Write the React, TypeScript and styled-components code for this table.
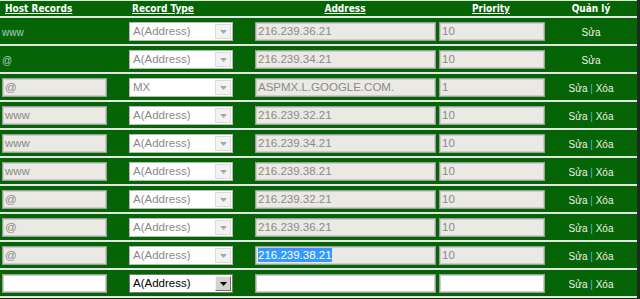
import React from "react";
import styled, { createGlobalStyle, css } from "styled-components";

const GREEN = "#056405";
const SEP = "#e3e5e1";

const Global = createGlobalStyle`
  html, body { margin: 0; padding: 0; background: #1a2e1a; }
  body { width: 640px; height: 299px; overflow: hidden; font-family: "Liberation Sans", Arial, sans-serif; }
`;

const Table = styled.div`
  width: 637px;
  background: ${GREEN};
  border-top: 1px solid ${SEP};
  border-bottom: 2px solid ${SEP};
`;

const Row = styled.div<{ $header?: boolean }>`
  display: grid;
  grid-template-columns: 127px 126px 184px 108px 92px;
  align-items: center;
  ${(p) =>
    p.$header
      ? css`
          height: 15px;
        `
      : css`
          height: 25px;
          padding-top: 1px;
          border-top: 2px solid ${SEP};
        `}
`;

const HeadCell = styled.div<{ $align?: "left" | "center"; $plain?: boolean }>`
  font-family: "DejaVu Sans Condensed", "Liberation Sans", sans-serif;
  font-weight: bold;
  font-size: 10px;
  line-height: 15px;
  color: #ffffff;
  text-decoration: ${(p) => (p.$plain ? "none" : "underline")};
  text-align: ${(p) => p.$align ?? "left"};
  padding-left: ${(p) => (p.$align === "center" ? 0 : 5)}px;
  white-space: nowrap;
`;

const Cell = styled.div`
  padding-left: 2px;
  display: flex;
  align-items: center;
`;

const PlainHost = styled.span`
  font-size: 10px;
  color: #a8d0c6;
  padding-top: 1px;
`;

const Field = styled.div<{ $w: number; $disabled?: boolean }>`
  width: ${(p) => p.$w}px;
  height: 19px;
  box-sizing: border-box;
  border: 1px solid #9d9d9d;
  box-shadow: inset 0 0 0 1px #cdcdcd;
  background: ${(p) => (p.$disabled ? "#ebe9e3" : "#ffffff")};
  color: #8a8a8a;
  font-size: 11.5px;
  line-height: 17px;
  padding-left: 2px;
  white-space: nowrap;
  overflow: hidden;
`;

const Selected = styled.span`
  background: #3399ff;
  color: #ffffff;
  padding: 1px 0;
`;

const SelectBox = styled.div<{ $disabled?: boolean }>`
  width: 104px;
  height: 19px;
  box-sizing: border-box;
  border: 1px solid ${(p) => (p.$disabled ? "#b9b9b9" : "#7a7a7a")};
  background: #ffffff;
  display: flex;
  align-items: stretch;
  font-size: 11.5px;
  color: ${(p) => (p.$disabled ? "#8a8a8a" : "#000000")};
`;

const SelectText = styled.span`
  flex: 1;
  line-height: 17px;
  padding-left: 3px;
  white-space: nowrap;
`;

const SelectButton = styled.span<{ $disabled?: boolean }>`
  width: 16px;
  margin: 1px;
  box-sizing: border-box;
  display: flex;
  align-items: center;
  justify-content: center;
  ${(p) =>
    p.$disabled
      ? css`
          background: #f3f3f3;
          border: 1px solid #dcdcdc;
        `
      : css`
          background: #d6d3cc;
          border-top: 1px solid #f4f4f4;
          border-left: 1px solid #f4f4f4;
          border-right: 1px solid #6f6f6f;
          border-bottom: 1px solid #6f6f6f;
        `}
`;

const Actions = styled.div`
  text-align: center;
  font-size: 10px;
  color: #f2f2e8;
  white-space: nowrap;
  padding-top: 1px;
`;

const Pipe = styled.span`
  color: #3cc6f2;
`;

type Rec = {
  host: string;
  hostInput: boolean;
  type: string;
  addr: string;
  pri: string;
  del: boolean;
  selected?: boolean;
  fresh?: boolean;
};

const records: Rec[] = [
  { host: "www", hostInput: false, type: "A(Address)", addr: "216.239.36.21", pri: "10", del: false },
  { host: "@", hostInput: false, type: "A(Address)", addr: "216.239.34.21", pri: "10", del: false },
  { host: "@", hostInput: true, type: "MX", addr: "ASPMX.L.GOOGLE.COM.", pri: "1", del: true },
  { host: "www", hostInput: true, type: "A(Address)", addr: "216.239.32.21", pri: "10", del: true },
  { host: "www", hostInput: true, type: "A(Address)", addr: "216.239.34.21", pri: "10", del: true },
  { host: "www", hostInput: true, type: "A(Address)", addr: "216.239.38.21", pri: "10", del: true },
  { host: "@", hostInput: true, type: "A(Address)", addr: "216.239.32.21", pri: "10", del: true },
  { host: "@", hostInput: true, type: "A(Address)", addr: "216.239.36.21", pri: "10", del: true },
  { host: "@", hostInput: true, type: "A(Address)", addr: "216.239.38.21", pri: "10", del: true, selected: true },
  { host: "", hostInput: true, type: "A(Address)", addr: "", pri: "", del: true, fresh: true },
];

const Arrow = ({ color }: { color: string }) => (
  <svg width="7" height="4" viewBox="0 0 7 4">
    <polygon points="0,0 7,0 3.5,4" fill={color} />
  </svg>
);

export default function App() {
  return (
    <>
      <Global />
      <Table>
        <Row $header>
          <HeadCell>Host Records</HeadCell>
          <HeadCell>Record Type</HeadCell>
          <HeadCell $align="center">Address</HeadCell>
          <HeadCell $align="center">Priority</HeadCell>
          <HeadCell $align="center" $plain>
            Quản lý
          </HeadCell>
        </Row>
        {records.map((r, i) => {
          const disabled = !r.fresh;
          return (
            <Row key={i}>
              <Cell>
                {r.hostInput ? (
                  <Field $w={105} $disabled={disabled}>
                    {r.host}
                  </Field>
                ) : (
                  <PlainHost>{r.host}</PlainHost>
                )}
              </Cell>
              <Cell>
                <SelectBox $disabled={disabled}>
                  <SelectText>{r.type}</SelectText>
                  <SelectButton $disabled={disabled}>
                    <Arrow color={disabled ? "#a8a8a8" : "#000000"} />
                  </SelectButton>
                </SelectBox>
              </Cell>
              <Cell>
                <Field $w={181} $disabled={disabled}>
                  {r.selected ? <Selected>{r.addr}</Selected> : r.addr}
                </Field>
              </Cell>
              <Cell>
                <Field $w={106} $disabled={disabled}>
                  {r.pri}
                </Field>
              </Cell>
              <Actions>
                {r.del ? (
                  <>
                    Sửa <Pipe>|</Pipe> Xóa
                  </>
                ) : (
                  "Sửa"
                )}
              </Actions>
            </Row>
          );
        })}
      </Table>
    </>
  );
}
